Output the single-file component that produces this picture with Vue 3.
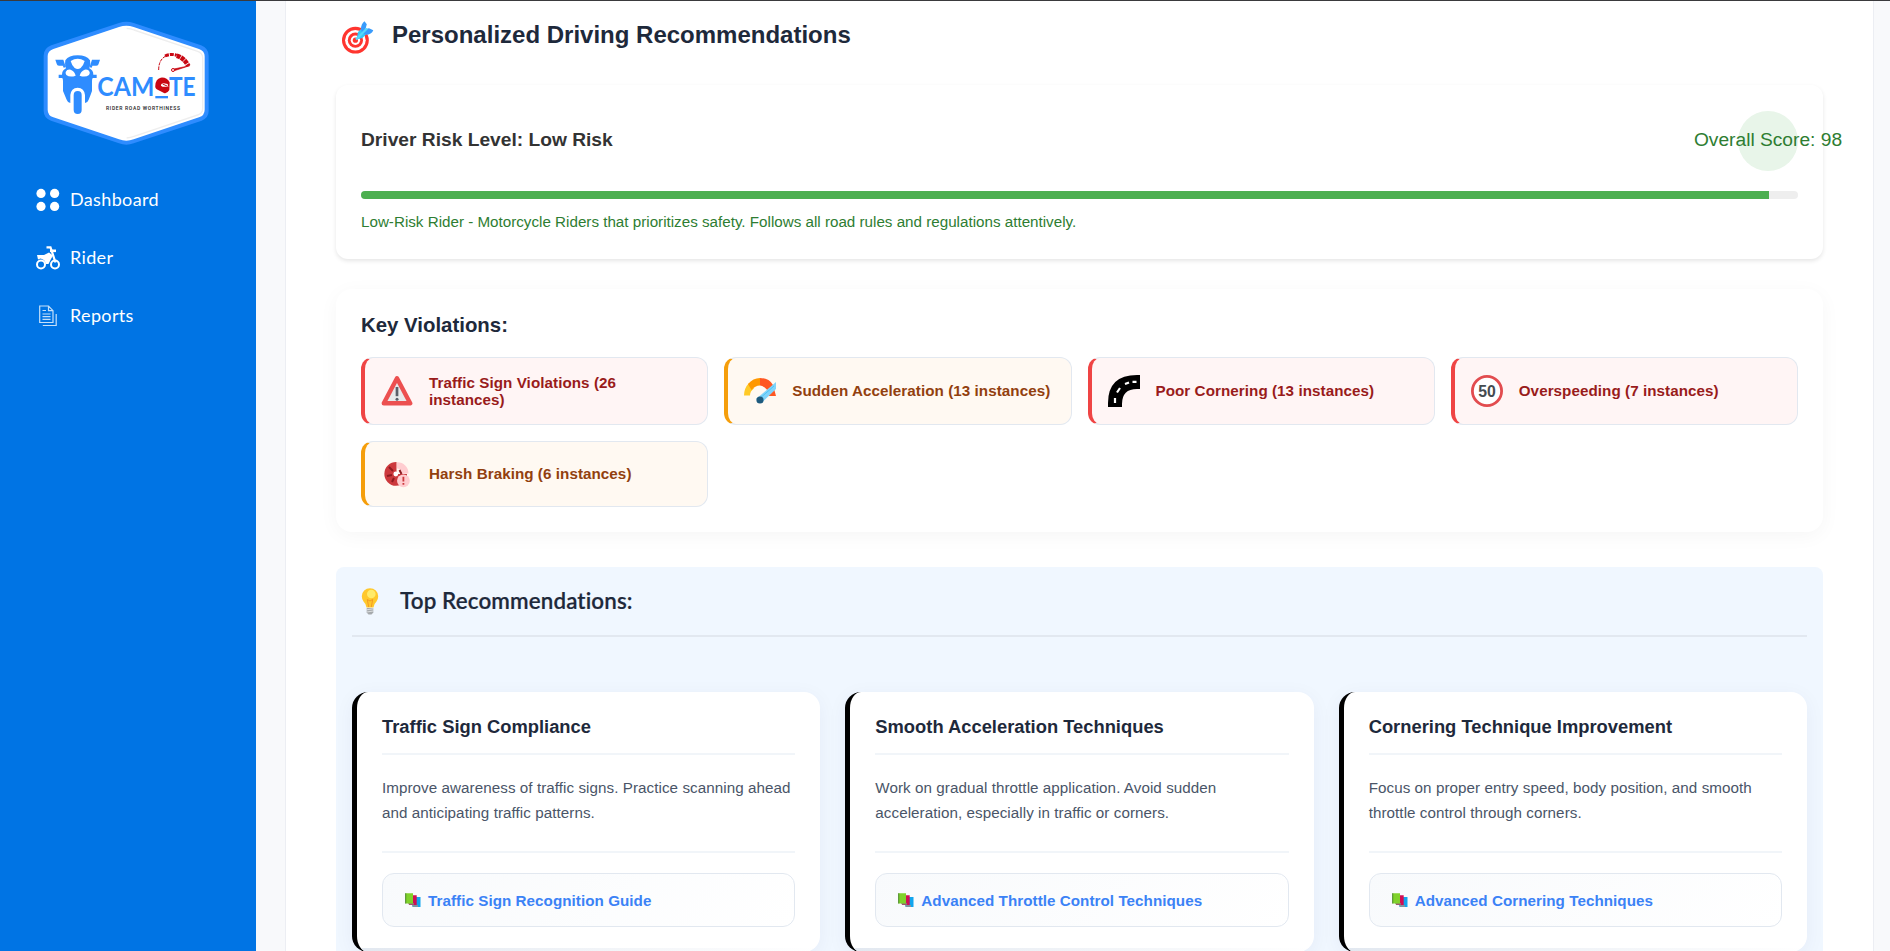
<script setup>
const nav = [
  { id: 'dashboard', label: 'Dashboard' },
  { id: 'rider', label: 'Rider' },
  { id: 'reports', label: 'Reports' },
]

const score = 98

const violations = [
  { icon: 'warning', text: 'Traffic Sign Violations (26 instances)', level: 'high' },
  { icon: 'gauge', text: 'Sudden Acceleration (13 instances)', level: 'medium' },
  { icon: 'road', text: 'Poor Cornering (13 instances)', level: 'high' },
  { icon: 'limit', text: 'Overspeeding (7 instances)', level: 'high' },
  { icon: 'brake', text: 'Harsh Braking (6 instances)', level: 'medium' },
]

const recommendations = [
  {
    title: 'Traffic Sign Compliance',
    body: 'Improve awareness of traffic signs. Practice scanning ahead and anticipating traffic patterns.',
    link: 'Traffic Sign Recognition Guide',
  },
  {
    title: 'Smooth Acceleration Techniques',
    body: 'Work on gradual throttle application. Avoid sudden acceleration, especially in traffic or corners.',
    link: 'Advanced Throttle Control Techniques',
  },
  {
    title: 'Cornering Technique Improvement',
    body: 'Focus on proper entry speed, body position, and smooth throttle control through corners.',
    link: 'Advanced Cornering Techniques',
  },
]
</script>

<template>
  <div class="app">
    <aside class="sidebar">
      <svg class="logo" viewBox="0 0 570 405">
        <path d="M267 24Q289 17 311 24L513 91Q536 100 536 122V288Q536 308 515 317L311 385Q289 393 267 385L63 317Q41 309 41 288V122Q41 100 64 91Z" fill="#2e8cff" />
        <path d="M267 36Q289 29 311 36L507 102Q524 108 524 124V284Q524 301 507 307L311 373Q289 381 267 373L70 307Q53 301 53 284V124Q53 108 70 102Z" fill="#fff" />
        <path d="M290 40Q302 41 312 45L503 109Q518 114 518 128V281Q518 295 503 300L312 364Q302 368 290 369" fill="none" stroke="#eee" stroke-width="4" />
        <g fill="#2e8cff">
          <path d="M76 134H100L106 152H87Q81 152 80 146ZM210 134H186L180 152H199Q205 152 206 146Z" />
          <path d="M106 136Q116 121 143 121Q170 121 180 136Q183 149 178 160Q190 166 190 179H200V189H190Q186 187 186 198V228Q182 240 176 254Q173 263 165 264V240Q163 219 143 218Q123 219 121 240V264Q113 263 110 254Q104 240 99 228V198Q99 187 95 189H86V179H96Q96 166 108 160Q103 149 106 136Z" />
          <rect x="131" y="228" width="24" height="69" rx="12" />
          <path d="M98 151L108 151L107 157L101 158ZM188 151L178 151L179 157L185 158Z" />
        </g>
        <g fill="#fff">
          <path d="M122 138Q143 124 164 138Q161 150 152 159Q143 165 134 159Q125 150 122 138Z" />
          <path d="M107 171Q111 162 122 164Q134 169 137 182Q120 188 109 180Q106 176 107 171ZM179 171Q175 162 164 164Q152 169 149 182Q166 188 177 180Q180 176 179 171Z" />
        </g>
        <g class="brand">
          <text x="202" y="242" textLength="171" lengthAdjust="spacingAndGlyphs">CAM</text>
          <text x="417" y="242" textLength="80" lengthAdjust="spacingAndGlyphs">TE</text>
        </g>
        <path d="M376 211Q377 192 392 188Q411 186 419 202L418 225Q411 237 402 234L383 224Q374 221 376 211Z" fill="#c90712" />
        <path d="M393 212Q392 206 401 205L413 207L415 216L407 215Q399 217 393 212Z" fill="#fff" />
        <path d="M398 207L413 214" stroke="#c90712" stroke-width="3" />
        <rect x="376" y="243" width="38" height="7" fill="#2e8cff" />
        <path d="M386 165Q386 135 406 124" fill="none" stroke="#c90712" stroke-width="3" stroke-dasharray="10 3" />
        <path d="M405 123Q423 115 440 121" fill="none" stroke="#c90712" stroke-width="9" stroke-dasharray="12 3" />
        <path d="M440 122Q462 128 475 153" fill="none" stroke="#c90712" stroke-width="14" stroke-dasharray="12 2" />
        <path d="M427 163L479 152L430 168Z" fill="#c90712" stroke="#c90712" stroke-width="2" />
        <circle cx="429" cy="165" r="4.5" fill="#fff" stroke="#c90712" stroke-width="3" />
        <text class="tagline" x="228" y="285" textLength="222" lengthAdjust="spacing">RIDER ROAD WORTHINESS</text>
      </svg>

      <nav class="nav">
        <a v-for="item in nav" :key="item.id" class="nav-item">
          <svg v-if="item.id === 'dashboard'" class="nav-icon" viewBox="0 0 24 24" fill="#fff">
            <circle cx="5" cy="5.4" r="4.6" /><circle cx="18.6" cy="5.4" r="4.6" />
            <circle cx="5" cy="18.4" r="4.6" /><circle cx="18.6" cy="18.4" r="4.6" />
          </svg>
          <svg v-else-if="item.id === 'rider'" class="nav-icon" viewBox="0 0 24 24">
            <g fill="none" stroke="#fff">
              <circle cx="5" cy="18.5" r="4" stroke-width="2" /><circle cx="19" cy="18.5" r="4" stroke-width="2" />
              <path d="M10.5 1.3H14.5L19.5 16.5" stroke-width="2.2" /><path d="M14 4.8H20" stroke-width="2.6" />
            </g>
            <path d="M1 9H8L13 6.5L17 9.5L15 13L12.5 18H9.5Q9.5 13.5 4.5 12.5L2 13.5Z" fill="#fff" />
          </svg>
          <svg v-else class="nav-icon" viewBox="0 0 24 24" fill="none" stroke="#c5e0fa" stroke-width="1.2">
            <path d="M3.7 2H12.5L17 6.7V18.5H3.7ZM12.5 2V6.7H17M6.5 6.5H10M6.5 10H14.5M6.5 12.7H14.5M6.5 15.4H14.5" />
            <path d="M20.2 10V21.5H6.8" />
          </svg>
          <span>{{ item.label }}</span>
        </a>
      </nav>
    </aside>

    <main class="panel">
      <h1 class="page-title">
        <svg class="target" viewBox="0 0 32 33">
          <circle cx="13.4" cy="19.2" r="13.4" fill="#ff352f" />
          <circle cx="13.4" cy="19.2" r="10.3" fill="#fff" />
          <circle cx="13.4" cy="19.2" r="7.6" fill="#ff352f" />
          <circle cx="13.4" cy="19.2" r="4.7" fill="#fff" />
          <circle cx="13.4" cy="19.2" r="2.6" fill="#ff352f" />
          <path d="M14.5 18.5L16 11L20 7L26 11.5L20.5 17Z" fill="#35c8f5" />
          <path d="M19 8Q19 3 22.5 .3L24.8 3.2L23.5 8L27 7.2L31.3 9.2Q29.5 13.5 24 13.8L20 12Z" fill="#399bfb" />
          <path d="M14 18.6L25 7.4" stroke="#55d8fb" stroke-width="2.2" />
        </svg>
        <span>Personalized Driving Recommendations</span>
      </h1>

      <section class="risk">
        <div class="risk-head">
          <h2>Driver Risk Level: Low Risk</h2>
          <div class="score"><span>Overall Score: {{ score }}</span></div>
        </div>
        <div class="bar"><div class="bar-fill" :style="{ width: score + '%' }"></div></div>
        <p>Low-Risk Rider - Motorcycle Riders that prioritizes safety. Follows all road rules and regulations attentively.</p>
      </section>

      <section class="violations">
        <h2>Key Violations:</h2>
        <div class="violation-grid">
          <div v-for="v in violations" :key="v.icon" class="violation" :class="v.level">
            <svg viewBox="0 0 32 32">
              <g v-if="v.icon === 'warning'">
                <path d="M16 3.3L29.2 28.2H2.8Z" fill="#e8eaeb" stroke="#ec5050" stroke-width="4.4" stroke-linejoin="round" />
                <path d="M16 12V21.2" stroke="#596069" stroke-width="2.7" /><circle cx="16" cy="24.3" r="1.5" fill="#596069" />
              </g>
              <g v-else-if="v.icon === 'gauge'">
                <path d="M0 20.5A16 17.5 0 0 1 5 8L10 13.5Q6 16 6 20.5Z" fill="#ffca28" />
                <path d="M4 9Q9 3 16 3V10.5Q11 10.5 7.5 15Z" fill="#ff9800" />
                <path d="M16 3Q25 3 29 10L32 21H25Q24 12 16 10.5Z" fill="#ff5722" />
                <path d="M12 24L32 7V14L18.5 27Z" fill="#81d4fa" /><path d="M14 25L30 11" stroke="#4fc3f7" />
                <circle cx="16" cy="25" r="3.6" fill="#1e5b7e" />
              </g>
              <g v-else-if="v.icon === 'road'">
                <path d="M0 32V28Q0 0 29 0H32V14H29Q14 14 14 29V32Z" fill="#000" />
                <path d="M7 28V23M9 17.5L12 13M17 9L21 7.4M24.5 6.8H28.5" fill="none" stroke="#fff" stroke-width="2.2" />
              </g>
              <g v-else-if="v.icon === 'limit'">
                <circle cx="16" cy="16" r="14.6" fill="#fff" stroke="#e24c4f" stroke-width="2.8" />
                <text x="16" y="21.8" text-anchor="middle" class="limit-text" textLength="17.5" lengthAdjust="spacingAndGlyphs">50</text>
              </g>
              <g v-else>
                <path d="M15.5 4V16L26 16Q26 27.5 15 27.8A11.7 11.7 0 0 1 15.5 4Z" fill="#cc393d" />
                <path d="M16 4.3A11 11 0 0 1 27.5 15.6L21 16A5 5 0 0 0 16 10.5Z" fill="#ffcdd0" />
                <path d="M8 9L12 13M6 18L11 17M11 24L13 20M18.5 12L20.5 16" stroke="#8f1a20" stroke-width="2" />
                <circle cx="14.8" cy="16" r="2.4" fill="#fff" />
                <circle cx="22.4" cy="22.8" r="6.4" fill="#ffcdd0" />
                <path d="M22.4 18.8V23.5M22.4 25V26.8" stroke="#cc393d" stroke-width="1.8" />
              </g>
            </svg>
            <span>{{ v.text }}</span>
          </div>
        </div>
      </section>

      <section class="recs">
        <h2 class="recs-head">
          <svg class="bulb" viewBox="0 0 18 27">
            <path d="M5.5 19.5Q5.2 16 2.5 13.5Q.8 11 .8 8.2A8.2 8 0 0 1 17.2 8.2Q17.2 11 15.5 13.5Q12.8 16 12.5 19.5Z" fill="#ffc82c" />
            <circle cx="10.3" cy="6" r="4.3" fill="#fff176" opacity=".85" />
            <path d="M7.7 19L6.3 11.5L9 13L11.7 11.5L10.3 19" fill="none" stroke="#f39a23" stroke-width="1" />
            <path d="M5.7 20H12.3V24.5L10.5 26.5H7.5L5.7 24.5Z" fill="#a6aaad" />
            <path d="M5.7 21.8L12.3 20.8M5.7 24L12.3 23" stroke="#e2e4e5" stroke-width=".9" />
          </svg>
          <span>Top Recommendations:</span>
        </h2>
        <div class="rec-grid">
          <article v-for="r in recommendations" :key="r.title" class="rec">
            <h3>{{ r.title }}</h3>
            <p>{{ r.body }}</p>
            <div class="rec-foot">
              <a class="rec-link">
                <svg viewBox="0 0 16 14">
                  <path d="M7.5 4H15.5V14H7.5Z" fill="#12a5ee" /><path d="M7 12H13V14H8Z" fill="#8194a1" />
                  <path d="M4 2.2H11.7V12H4Z" fill="#d10e54" /><path d="M3 10H9V11.8H4Z" fill="#8c7475" />
                  <path d="M.3.2H8V10.4H.3Z" fill="#80d22b" /><path d="M.3.2H1.2V10.4H.3Z" fill="#437e2c" />
                </svg>
                <span>{{ r.link }}</span>
              </a>
            </div>
          </article>
        </div>
      </section>
    </main>
  </div>
</template>

<style>
html,
body {
  margin: 0;
  overflow: hidden;
  background: #f8f9fc;
}
</style>

<style scoped>
* {
  box-sizing: border-box;
}
h1,
h2,
h3,
p {
  margin: 0;
}
.app {
  display: flex;
  height: 951px;
  overflow: hidden;
  border-top: 1px solid #3a3a3d;
  background: #f8f9fb;
  font-family: 'Liberation Sans', Arial, sans-serif;
}
.sidebar {
  width: 256px;
  flex: none;
  padding-top: 14px;
  background: #0074e4;
}
.logo {
  display: block;
  width: 190px;
  height: 135px;
  margin-left: 30px;
}
.brand {
  font-family: Lato, sans-serif;
  font-size: 82px;
  font-weight: 700;
  fill: #2e8cff;
}
.tagline {
  font-family: Roboto, sans-serif;
  font-size: 15px;
  font-weight: 500;
  fill: #222;
}
.nav {
  display: flex;
  flex-direction: column;
  margin-top: 21px;
}
.nav-item {
  display: flex;
  align-items: center;
  gap: 10px;
  height: 58px;
  padding-left: 36px;
  color: #fff;
  font-family: Lato, sans-serif;
  font-size: 18px;
  letter-spacing: 0.35px;
}
.nav-item span {
  padding-bottom: 2px;
}
.nav-icon {
  width: 24px;
  height: 24px;
}
.panel {
  flex: none;
  width: 1589px;
  height: 1100px;
  margin-left: 29px;
  padding: 0 50px;
  border: 1px solid #eceef3;
  border-top: 0;
  background: #fff;
}
.page-title {
  display: flex;
  align-items: center;
  gap: 18px;
  height: 69px;
  padding-left: 6px;
  color: #1e293b;
  font-size: 24px;
  font-weight: 700;
}
.page-title span {
  padding-bottom: 2px;
}
.target {
  width: 32px;
  height: 33px;
  margin-top: 3px;
}
.risk {
  height: 174px;
  margin-top: 15px;
  padding: 26px 25px 0;
  border-radius: 12px;
  box-shadow: 0 2px 4px rgba(0, 0, 0, 0.1);
}
.risk-head {
  display: flex;
  align-items: center;
  justify-content: space-between;
}
.risk-head h2 {
  padding-bottom: 2px;
  color: #333;
  font-size: 19.2px;
}
.score {
  display: flex;
  align-items: center;
  justify-content: center;
  width: 60px;
  height: 60px;
  padding-bottom: 2px;
  border-radius: 50%;
  background: #e8f5e9;
  color: #2e7d32;
  font-size: 19.2px;
  white-space: nowrap;
}
.bar {
  height: 8px;
  margin-top: 20px;
  overflow: hidden;
  border-radius: 4px;
  background: #eee;
}
.bar-fill {
  height: 100%;
  background: #4caf50;
}
.risk p {
  margin-top: 14px;
  color: #2e7d32;
  font-size: 15.2px;
  line-height: 18px;
}
.violations {
  height: 243px;
  margin-top: 30px;
  padding: 24px 25px 0;
  border-radius: 16px;
  box-shadow: 0 4px 20px rgba(0, 0, 0, 0.04);
}
.violations h2 {
  color: #1e293b;
  font-size: 20.4px;
  line-height: 24px;
}
.violation-grid {
  display: grid;
  grid-template-columns: repeat(4, 1fr);
  gap: 16px;
  margin-top: 20px;
}
.violation {
  display: flex;
  align-items: center;
  gap: 16px;
  padding: 16px;
  border: 1px solid #e2e8f0;
  border-left-width: 4px;
  border-radius: 12px;
  font-size: 15.2px;
  font-weight: 700;
  letter-spacing: 0.06px;
  line-height: 17px;
}
.violation:not(:first-child) span {
  padding-bottom: 2px;
}
.violation svg {
  width: 32px;
  height: 32px;
  flex: none;
}
.high {
  border-left-color: #ef4444;
  background: #fff5f5;
  color: #991b1b;
}
.medium {
  border-left-color: #f59e0b;
  background: #fff9f2;
  color: #92400e;
}
.limit-text {
  font-size: 16px;
  font-weight: 700;
  letter-spacing: 0;
  fill: #454b50;
}
.recs {
  height: 500px;
  margin-top: 35px;
  padding: 0 16px;
  border-radius: 8px;
  background: #f0f7ff;
}
.recs-head {
  display: flex;
  align-items: center;
  gap: 21px;
  height: 70px;
  padding-left: 9px;
  border-bottom: 2px solid #e2e8f0;
  color: #1e293b;
  font-family: Lato, sans-serif;
  font-size: 22.4px;
  font-weight: 600;
  font-variant-ligatures: none;
  letter-spacing: 0.12px;
  -webkit-text-stroke: 0.2px #1e293b;
}
.recs-head span {
  padding-bottom: 2px;
}
.bulb {
  width: 18px;
  height: 27px;
}
.rec-grid {
  display: grid;
  grid-template-columns: repeat(3, 1fr);
  gap: 25px;
  margin-top: 55px;
}
.rec {
  position: relative;
  height: 260px;
  padding: 24px 25px 0;
  overflow: hidden;
  border-left: 5px solid #000;
  border-radius: 16px;
  background: #fff;
  box-shadow: 0 4px 20px rgba(0, 40, 100, 0.05);
}
.rec::after {
  content: '';
  position: absolute;
  right: 0;
  bottom: 0;
  left: 0;
  height: 4px;
  background: linear-gradient(90deg, #e2e8f0, rgba(226, 232, 240, 0));
}
.rec h3 {
  height: 39px;
  border-bottom: 2px solid #f1f5f9;
  color: #1e293b;
  font-size: 18.35px;
  line-height: 22px;
}
.rec p {
  height: 50px;
  margin-top: 20px;
  color: #4a5568;
  font-size: 15.2px;
  letter-spacing: 0.06px;
  line-height: 25px;
}
.rec-foot {
  margin-top: 26px;
  padding-top: 20px;
  border-top: 2px solid #f1f5f9;
}
.rec-link {
  display: flex;
  align-items: center;
  gap: 7px;
  height: 54px;
  padding-left: 22px;
  border: 1px solid #e2e8f0;
  border-radius: 12px;
  background: linear-gradient(135deg, #f8fafc, #fff);
  color: #3b82f6;
  font-size: 15.2px;
  font-weight: 700;
  letter-spacing: 0.05px;
}
.rec-link svg {
  width: 16px;
  height: 14px;
}
</style>
